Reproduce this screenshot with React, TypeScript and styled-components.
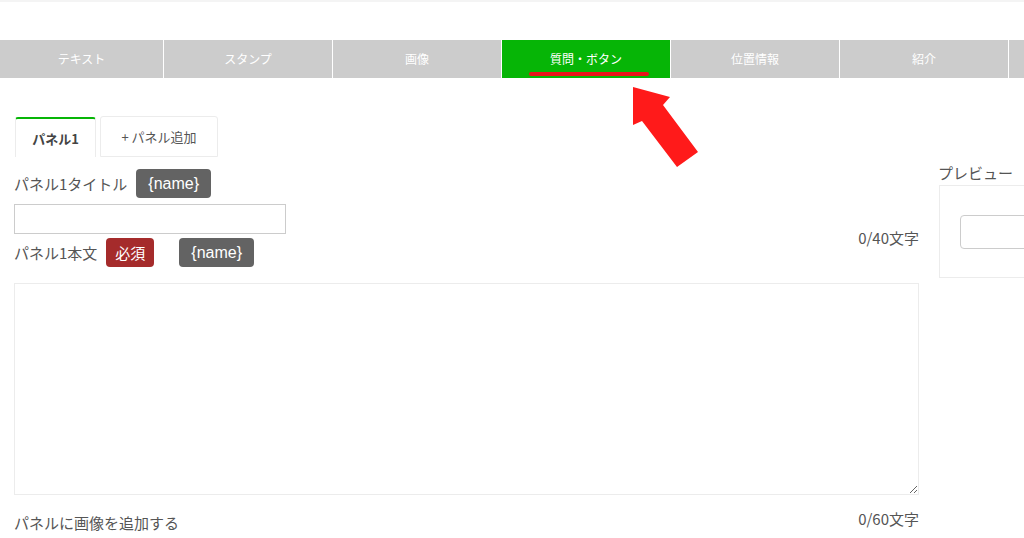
import React from 'react';
import styled, { createGlobalStyle } from 'styled-components';

const GlobalStyle = createGlobalStyle`
  body {
    margin: 0;
    overflow: hidden;
    background: #fff;
    font-family: 'Noto Sans CJK JP', 'Liberation Sans', sans-serif;
    color: #555;
  }
`;

const menuItems = ['テキスト', 'スタンプ', '画像', '質問・ボタン', '位置情報', '紹介', ''];
const menuWidths = [163, 168, 168, 168, 168, 168, 40];

const App = () => {
  return (
    <>
      <GlobalStyle />
      <St.Page>
        <St.TopStrip />
        <St.Nav>
          {menuItems.map((label, i) => (
            <St.NavItem key={i} $active={i === 3} $width={menuWidths[i]}>
              <St.NavLabel $active={i === 3}>{label}</St.NavLabel>
            </St.NavItem>
          ))}
        </St.Nav>

        <St.Arrow width="80" height="90" viewBox="0 0 80 90">
          <polygon points="3,7 40,17 33,25 68,72 47,87 12,41 3,45" fill="#ff1a1a" />
        </St.Arrow>

        <St.Body>
          <St.Main>
            <St.PanelTabs>
              <St.PanelTab $active>パネル1</St.PanelTab>
              <St.PanelTab>+ パネル追加</St.PanelTab>
            </St.PanelTabs>

            <St.LabelRow>
              <St.Label>パネル1タイトル</St.Label>
              <Badge>{'{name}'}</Badge>
            </St.LabelRow>
            <St.TextInput type="text" />

            <St.SplitRow>
              <St.LabelRow>
                <St.Label>パネル1本文</St.Label>
                <Badge $tone="red">必須</Badge>
                <St.Spacer />
                <Badge>{'{name}'}</Badge>
              </St.LabelRow>
              <St.Counter $shift={-6}>0/40文字</St.Counter>
            </St.SplitRow>

            <St.TextArea />

            <St.SplitRow $top={14}>
              <St.Label $shift={4}>パネルに画像を追加する</St.Label>
              <St.Counter>0/60文字</St.Counter>
            </St.SplitRow>
          </St.Main>

          <St.Preview>
            <St.Label>プレビュー</St.Label>
            <St.PreviewBox>
              <St.PreviewInput />
            </St.PreviewBox>
          </St.Preview>
        </St.Body>
      </St.Page>
    </>
  );
};

export default App;

const St = {
  Page: styled.div`
    position: relative;
    width: 1024px;
    height: 538px;
    overflow: hidden;
  `,
  TopStrip: styled.div`
    height: 2px;
    background: #f4f4f4;
    margin-bottom: 38px;
  `,
  Nav: styled.div`
    display: flex;
    gap: 1px;
    height: 38px;
    background: #fff;
  `,
  NavItem: styled.div<{ $active?: boolean; $width: number }>`
    flex: 0 0 ${(p) => p.$width}px;
    display: flex;
    align-items: center;
    justify-content: center;
    background: ${(p) => (p.$active ? '#06b506' : '#cccccc')};
  `,
  NavLabel: styled.span<{ $active?: boolean }>`
    position: relative;
    font-size: 12px;
    color: #fff;
    margin-top: -2px;
    &::after {
      content: '';
      display: ${(p) => (p.$active ? 'block' : 'none')};
      position: absolute;
      left: -21px;
      right: -27px;
      bottom: -9px;
      height: 4px;
      border-radius: 2px;
      background: #e8141b;
    }
  `,
  Arrow: styled.svg`
    position: absolute;
    left: 630px;
    top: 80px;
  `,
  Body: styled.div`
    display: flex;
    padding-left: 14px;
    gap: 19px;
  `,
  Main: styled.div`
    flex: 0 0 905px;
    display: flex;
    flex-direction: column;
  `,
  PanelTabs: styled.div`
    display: flex;
    gap: 4px;
    margin-top: 39px;
    margin-left: 1px;
    height: 40px;
  `,
  PanelTab: styled.div<{ $active?: boolean }>`
    display: flex;
    align-items: center;
    justify-content: center;
    box-sizing: border-box;
    width: ${(p) => (p.$active ? '81px' : '118px')};
    height: 40px;
    font-size: 13px;
    font-weight: ${(p) => (p.$active ? 700 : 400)};
    color: ${(p) => (p.$active ? '#444' : '#555')};
    border: 1px solid #ececec;
    border-top: ${(p) => (p.$active ? '2px solid #06b506' : '1px solid #ececec')};
    border-bottom: ${(p) => (p.$active ? 'none' : '1px solid #ececec')};
    border-radius: 3px 3px 0 0;
    ${(p) => (p.$active ? '' : 'margin-top: -1px; height: 41px;')}
  `,
  LabelRow: styled.div`
    display: flex;
    align-items: center;
    gap: 9px;
    margin-top: 12px;
  `,
  SplitRow: styled.div<{ $top?: number }>`
    display: flex;
    justify-content: space-between;
    align-items: flex-start;
    margin-top: ${(p) => p.$top ?? 0}px;
    & > div {
      margin-top: 4px;
    }
  `,
  Label: styled.span<{ $shift?: number }>`
    font-size: 15px;
    line-height: 20px;
    color: #555;
    margin-top: ${(p) => p.$shift ?? 0}px;
  `,
  Spacer: styled.span`
    width: 7px;
  `,
  Counter: styled.span<{ $shift?: number }>`
    font-size: 15px;
    line-height: 20px;
    color: #555;
    margin-top: ${(p) => p.$shift ?? 0}px;
  `,
  TextInput: styled.input`
    box-sizing: border-box;
    width: 272px;
    height: 30px;
    margin-top: 6px;
    border: 1px solid #cccccc;
    outline: none;
  `,
  TextArea: styled.textarea`
    box-sizing: border-box;
    width: 905px;
    height: 212px;
    margin-top: 16px;
    border: 1px solid #ececec;
    outline: none;
    resize: both;
  `,
  Preview: styled.div`
    flex: 0 0 300px;
    display: flex;
    flex-direction: column;
    margin-top: 85px;
  `,
  PreviewBox: styled.div`
    box-sizing: border-box;
    margin-top: 2px;
    margin-left: 1px;
    height: 93px;
    border: 1px solid #ececec;
    padding: 29px 0 0 20px;
  `,
  PreviewInput: styled.div`
    height: 32px;
    border: 1px solid #cccccc;
    border-radius: 4px;
  `,
};

const Badge = styled.span<{ $tone?: 'red' }>`
  display: inline-flex;
  align-items: center;
  justify-content: center;
  height: 29px;
  padding: 0 ${(p) => (p.$tone === 'red' ? 9 : 12)}px;
  border-radius: 4px;
  font-size: ${(p) => (p.$tone === 'red' ? 15 : 16)}px;
  color: #fff;
  background: ${(p) => (p.$tone === 'red' ? '#a52b2b' : '#636363')};
  font-family: 'Liberation Sans', 'Noto Sans CJK JP', sans-serif;
`;
